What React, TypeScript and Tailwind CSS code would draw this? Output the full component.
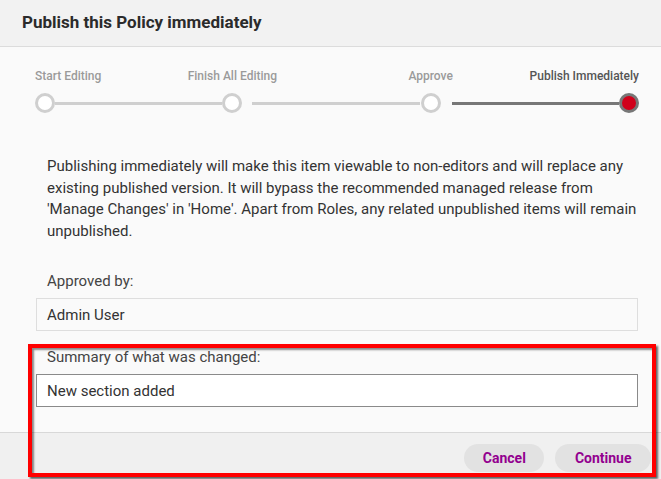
const steps = [
  { label: 'Start Editing', align: 'items-start', active: false },
  { label: 'Finish All Editing', align: 'items-center', active: false },
  { label: 'Approve', align: 'items-center', active: false },
  { label: 'Publish Immediately', align: 'items-end', active: true },
];

function Step({ label, align, active }: { label: string; align: string; active: boolean }) {
  return (
    <div className={`flex w-[20px] shrink-0 flex-col ${align}`}>
      <span
        className={`whitespace-nowrap text-[12px] font-medium leading-4 ${
          active ? 'text-[#555]' : 'text-[#9a9a9a]'
        }`}
      >
        {label}
      </span>
      <span
        className={`mt-[9px] block h-[20px] w-[20px] rounded-full border-[3px] ${
          active ? 'border-[#777] bg-[#d0011b]' : 'border-[#cfcfcf] bg-white'
        }`}
      />
    </div>
  );
}

function Stepper() {
  return (
    <div className="flex items-end pl-[35px] pr-[22px] pt-[21px]">
      <Step {...steps[0]} />
      <div className="mb-[8px] h-[3px] flex-1 bg-[#cfcfcf]" />
      <Step {...steps[1]} />
      <div className="mb-[8px] ml-[10px] mr-[1px] h-[3px] flex-1 bg-[#cfcfcf]" />
      <Step {...steps[2]} />
      <div className="mb-[8px] ml-[11px] h-[3px] flex-1 bg-[#777]" />
      <Step {...steps[3]} />
    </div>
  );
}

export default function App() {
  return (
    <div className="relative flex h-[479px] w-[661px] flex-col overflow-hidden bg-[#fafafa] font-['Roboto',sans-serif] text-[#333]">
      <header className="flex h-[47px] shrink-0 items-center border-b border-[#dcdcdc] bg-[#f2f2f2] pl-[22px]">
        <h1 className="text-[17px] font-bold text-[#2b2b2b]">Publish this Policy immediately</h1>
      </header>

      <div className="flex-1">
        <Stepper />

        <div className="pl-[47px] pr-[20px] pt-[43px]">
          <p className="text-[15px] leading-[21.6px] text-[#333]">
            Publishing immediately will make this item viewable to non-editors and will replace any
            existing published version. It will bypass the recommended managed release from 'Manage
            Changes' in 'Home'. Apart from Roles, any related unpublished items will remain
            unpublished.
          </p>
        </div>

        <div className="pl-[36px] pr-[23px]">
          <label className="mt-[28px] block pl-[11px] text-[15px] leading-[22px] text-[#444]">
            Approved by:
          </label>
          <div className="mt-[6px] flex h-[33px] items-center border border-[#dedede] bg-[#fafafa] pl-[10px] text-[15px]">
            Admin User
          </div>

          <label className="mt-[15px] block pl-[11px] text-[15px] leading-[22px] text-[#444]">
            Summary of what was changed:
          </label>
          <div className="mt-[6px] flex h-[33px] items-center border border-[#8a8a8a] bg-white pl-[10px] text-[15px]">
            New section added
          </div>
        </div>
      </div>

      <footer className="flex h-[47px] shrink-0 items-start justify-end gap-[11px] border-t border-[#d8d8d8] bg-[#f0f0f0] pr-[10px] pt-[11px]">
        <button className="h-[28px] rounded-full bg-[#e2e2e2] px-[18.5px] text-[14px] font-bold text-[#93008f]">
          Cancel
        </button>
        <button className="h-[28px] rounded-full bg-[#e2e2e2] px-[19.5px] text-[14px] font-bold text-[#93008f]">
          Continue
        </button>
      </footer>

      {/* annotation highlight */}
      <div className="pointer-events-none absolute left-[28px] top-[344px] h-[133px] w-[628px] border-4 border-[#ff0000] shadow-[2px_2px_2px_rgba(0,0,0,0.6),inset_2px_2px_2px_rgba(0,0,0,0.45)]" />
    </div>
  );
}
